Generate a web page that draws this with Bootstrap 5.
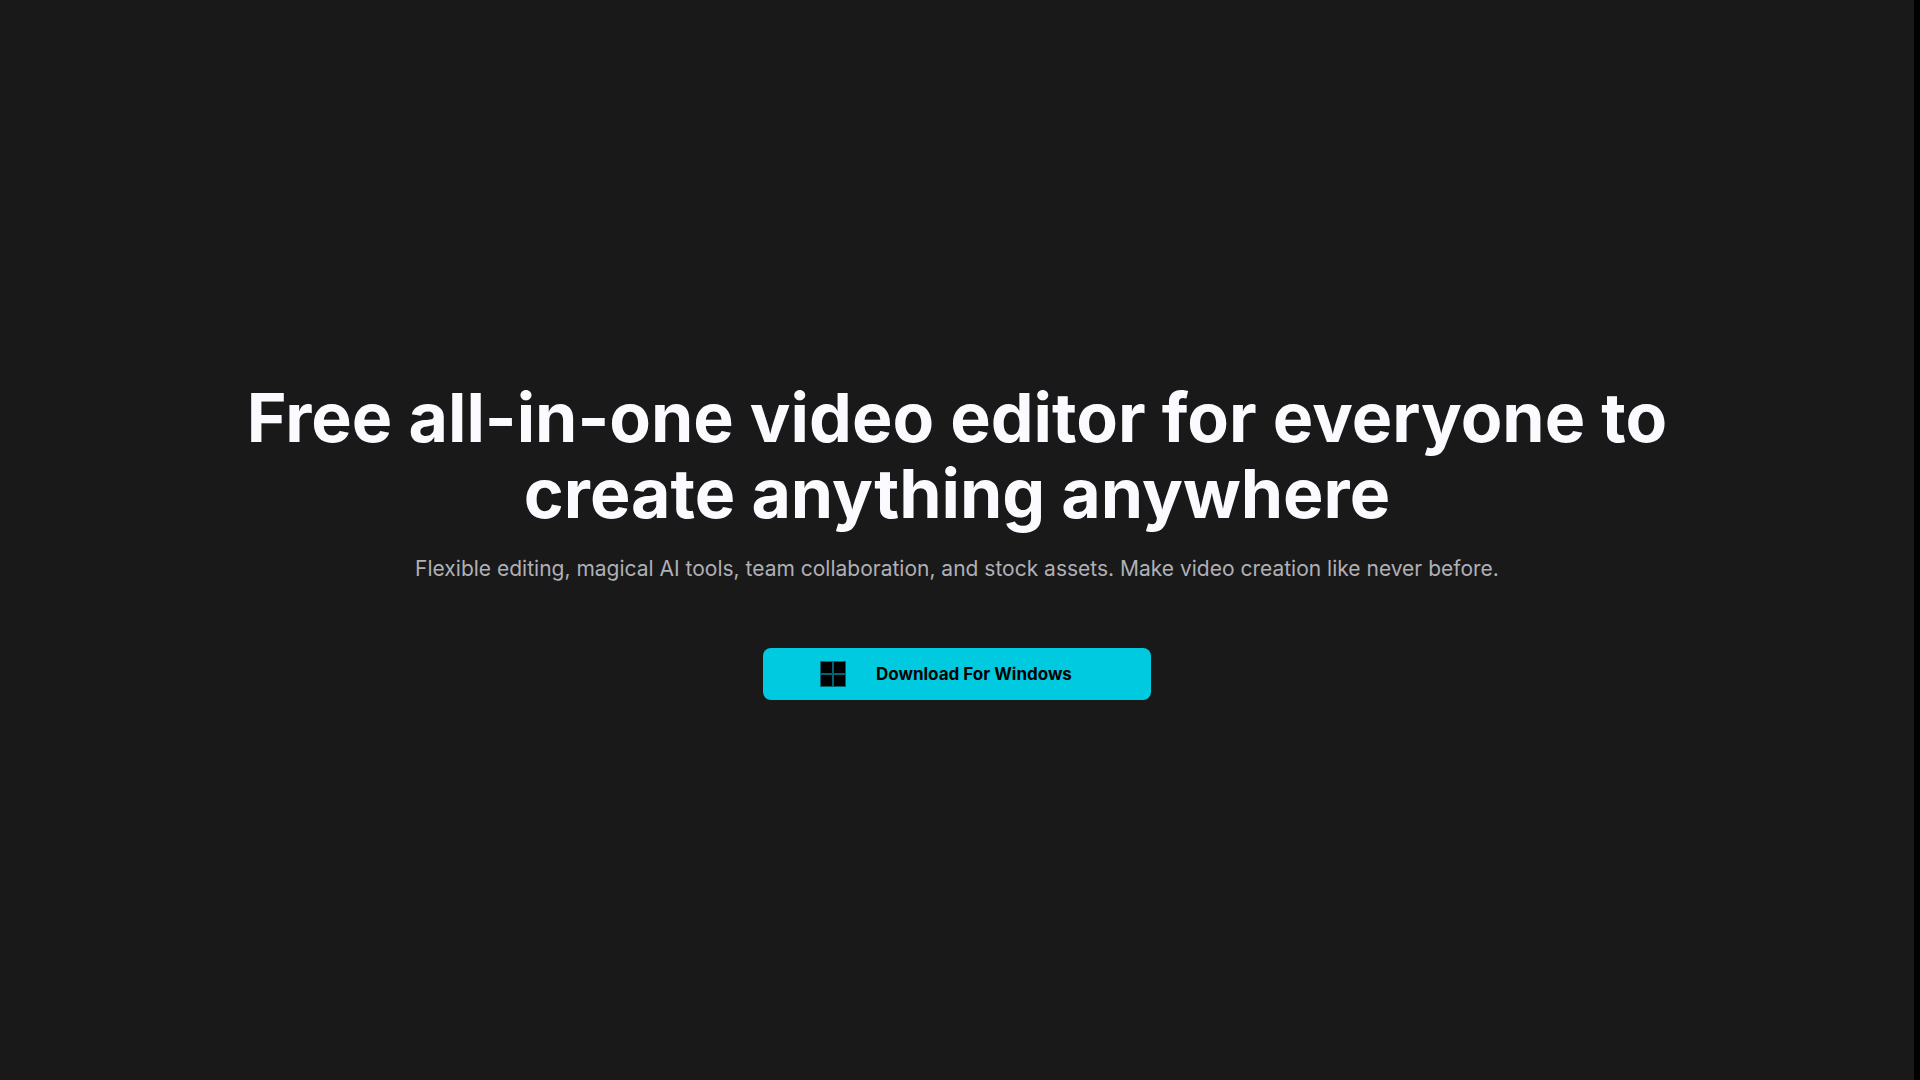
<!DOCTYPE html>
<html lang="en">
<head>
<meta charset="utf-8">
<meta name="viewport" content="width=device-width, initial-scale=1">
<title>Free all-in-one video editor</title>
<link href="https://cdn.jsdelivr.net/npm/bootstrap@5.3.0/dist/css/bootstrap.min.css" rel="stylesheet">
<style>
  body { background: #000; font-family: Inter, "Liberation Sans", sans-serif; padding-right: 6px; }
  .hero { background: #191919; padding-bottom: 2px; }
  .hero-copy { max-width: 1500px; }
  .hero-title { color: #fafaff; font-size: 68px; line-height: 76px; font-weight: 700; }
  .hero-text { color: #b0b0b5; font-size: 21px; line-height: 28px; margin-bottom: 65px; }
  .btn-download { --bs-btn-bg: #00cae0; --bs-btn-color: #000; --bs-btn-hover-bg: #2bd8eb; --bs-btn-hover-color: #000; --bs-btn-border-width: 0; --bs-btn-border-radius: 8px; --bs-btn-padding-x: 57px; --bs-btn-padding-y: 13px; width: 388px; max-width: 100%; gap: 30px; font-size: 17px; line-height: 26px; font-weight: 700; }
</style>
</head>
<body>
<main class="hero min-vh-100 d-flex flex-column align-items-center justify-content-center text-center px-3">
  <div class="hero-copy">
    <h1 class="hero-title mb-4">Free all-in-one video editor for everyone to<br class="d-none d-xl-inline"> create anything anywhere</h1>
    <p class="hero-text">Flexible editing, magical AI tools, team collaboration, and stock assets. Make video creation like never before.</p>
  </div>
  <button type="button" class="btn btn-download d-flex align-items-center">
    <svg width="26" height="26" viewBox="0 0 26 26" aria-hidden="true"><path fill-opacity=".5" d="M0 0h26v26H0z"/><path d="M1 1h11v11H1zM14 1h11v11H14zM1 14h11v11H1zM14 14h11v11H14z"/></svg>
    <span>Download For Windows</span>
  </button>
</main>
<script src="https://cdn.jsdelivr.net/npm/bootstrap@5.3.0/dist/js/bootstrap.bundle.min.js"></script>
</body>
</html>
